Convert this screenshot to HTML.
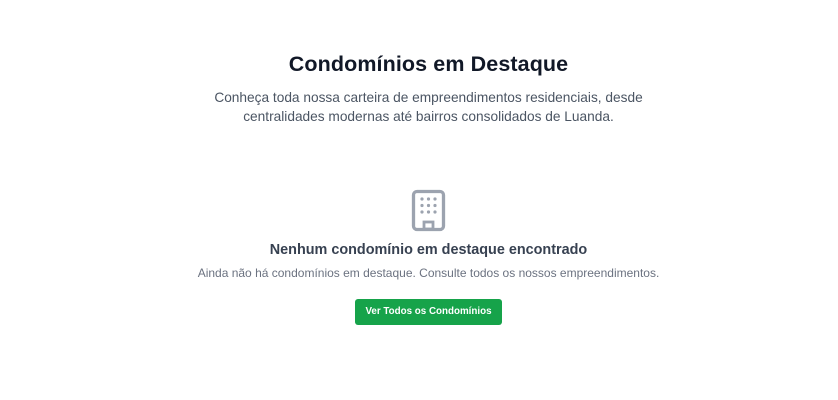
<!DOCTYPE html>
<html><head><meta charset="utf-8"><style>
*{margin:0;padding:0;box-sizing:border-box}
body{width:838px;height:400px;background:#fff;font-family:"Liberation Sans",sans-serif;position:relative;overflow:hidden}
.c{position:absolute;left:9.5px;width:838px;text-align:center}
h1{top:52px;font-size:21.5px;font-weight:bold;color:#111827;letter-spacing:0.1px}
.sub{top:88px;font-size:13.7px;line-height:19px;color:#4b5563}
h2{top:242px;font-size:14.4px;font-weight:bold;color:#374151}
.p{top:266px;font-size:12px;color:#6b7280}
.btn{position:absolute;left:355px;top:299px;width:147px;height:26px;background:#16a34a;border-radius:3px;color:#fff;font-size:9.8px;font-weight:bold;text-align:center;line-height:26px}
svg{position:absolute;left:410px;top:189px}
</style></head><body>
<h1 class="c">Condomínios em Destaque</h1>
<div class="c sub">Conheça toda nossa carteira de empreendimentos residenciais, desde<br>centralidades modernas até bairros consolidados de Luanda.</div>
<svg width="37" height="43" viewBox="0 0 37 43" fill="none" stroke="#9ca3af" stroke-width="3.3">
<rect x="3.5" y="2.5" width="30" height="38" rx="3.5"/>
<rect x="14" y="33" width="9" height="7" stroke-width="2.8"/>
<g fill="#9ca3af" stroke="none">
<circle cx="12" cy="10" r="1.6"/><circle cx="18.5" cy="10" r="1.6"/><circle cx="25" cy="10" r="1.6"/>
<circle cx="12" cy="16.5" r="1.6"/><circle cx="18.5" cy="16.5" r="1.6"/><circle cx="25" cy="16.5" r="1.6"/>
<circle cx="12" cy="23" r="1.6"/><circle cx="18.5" cy="23" r="1.6"/><circle cx="25" cy="23" r="1.6"/>
</g></svg>
<h2 class="c">Nenhum condomínio em destaque encontrado</h2>
<div class="c p">Ainda não há condomínios em destaque. Consulte todos os nossos empreendimentos.</div>
<div class="btn">Ver Todos os Condomínios</div>
</body></html>
